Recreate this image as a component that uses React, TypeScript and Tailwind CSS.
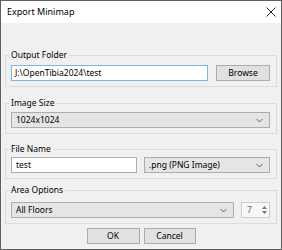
import React from 'react';

const font = { fontFamily: '"Noto Sans", "Open Sans", sans-serif' };

const Chevron: React.FC = () => (
  <svg width="7" height="5" viewBox="0 0 7 5" className="shrink-0">
    <path d="M0.5 1 L3.5 4 L6.5 1" fill="none" stroke="#606060" strokeWidth="1" />
  </svg>
);

const Group: React.FC<{ title: string; className?: string; children: React.ReactNode }> = ({
  title,
  className = '',
  children
}) => (
  <fieldset className={`border border-[#dcdcdc] pl-[5px] pr-[6px] pb-[5px] ${className}`}>
    <legend className="px-0.5 -ml-0.5 text-[8.5px] leading-[14px] text-black">{title}</legend>
    {children}
  </fieldset>
);

const Select: React.FC<{ value: string; className?: string }> = ({ value, className = '' }) => (
  <div
    className={`flex items-center justify-between h-[16px] border border-[#adadad] bg-[#e5e5e5] pl-[4px] pr-[6px] text-[8.5px] text-black ${className}`}
  >
    <span className="leading-none">{value}</span>
    <Chevron />
  </div>
);

export default function App() {
  return (
    <div className="w-[282px] h-[250px] border border-[#5f5f5f] bg-[#f0f0f0] flex flex-col" style={font}>
      <div className="h-[22px] bg-white flex items-center justify-between pl-[6px] pr-[5px] shrink-0">
        <span className="text-[9px] text-black">Export Minimap</span>
        <svg width="10" height="10" viewBox="0 0 10 10">
          <path d="M0.5 0.5 L9.5 9.5 M9.5 0.5 L0.5 9.5" stroke="#222" strokeWidth="1" />
        </svg>
      </div>

      <div className="flex flex-col px-[4px] pt-[25px]">
        <Group title="Output Folder">
          <div className="flex gap-[8px] mt-[3px]">
            <div className="w-[197px] h-[16px] border border-[#7eb4ea] bg-white flex items-center pl-[3px] text-[8.5px] text-black">
              J:\OpenTibia2024\test
            </div>
            <button className="flex-1 h-[16px] border border-[#adadad] bg-[#e1e1e1] text-[8.5px] leading-none text-black">
              Browse
            </button>
          </div>
        </Group>

        <Group title="Image Size" className="mt-[9px]">
          <Select value="1024x1024" className="mt-[2px]" />
        </Group>

        <Group title="File Name" className="mt-[8px]">
          <div className="flex gap-[7px] mt-[1px]">
            <div className="w-[126px] h-[16px] border border-[#adadad] bg-white flex items-center pl-[4px] text-[8.5px] text-black">
              test
            </div>
            <Select value=".png (PNG Image)" className="flex-1" />
          </div>
        </Group>

        <Group title="Area Options" className="mt-[4px]">
          <div className="flex gap-[7px] mt-[5px]">
            <Select value="All Floors" className="w-[223px]" />
            <div className="flex-1 h-[16px] border border-[#cccccc] bg-[#f7f7f7] flex items-center justify-between pl-[5px] pr-[2px] text-[8.5px] text-[#6d6d6d]">
              <span className="leading-none">7</span>
              <div className="flex flex-col items-center gap-[2px]">
                <svg width="5" height="3" viewBox="0 0 5 3">
                  <path d="M0 3 L2.5 0 L5 3 Z" fill="#777" />
                </svg>
                <svg width="5" height="3" viewBox="0 0 5 3">
                  <path d="M0 0 L2.5 3 L5 0 Z" fill="#777" />
                </svg>
              </div>
            </div>
          </div>
        </Group>

        <div className="flex justify-center gap-[4px] mt-[4px]">
          <button className="w-[53px] h-[16px] border border-[#adadad] bg-[#e1e1e1] text-[8.5px] leading-none text-black">
            OK
          </button>
          <button className="w-[52px] h-[16px] border border-[#adadad] bg-[#e1e1e1] text-[8.5px] leading-none text-black">
            Cancel
          </button>
        </div>
      </div>
    </div>
  );
}
